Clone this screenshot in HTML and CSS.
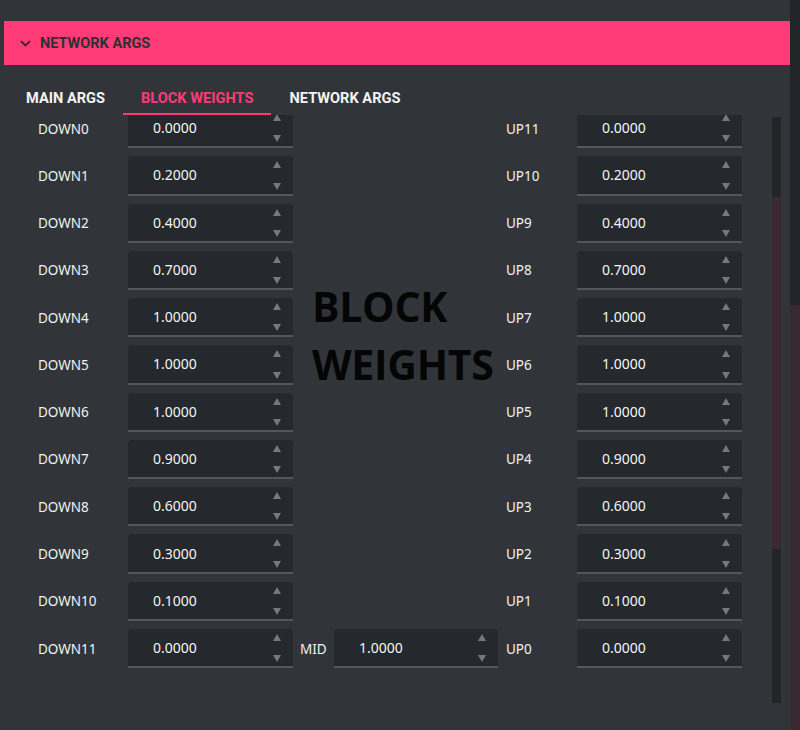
FILE: index.html
```html
<!DOCTYPE html>
<html lang="en">
<head>
    <meta charset="UTF-8">
    <meta name="viewport" content="width=device-width, initial-scale=1.0">
    <title>Block Weights</title>
    <link rel="stylesheet" href="styles.css">
</head>
<body>
    <div class="page">
        <div class="main">
            <div class="accordion-head">
                <svg class="chevron" width="11" height="7" viewBox="0 0 11 7"><path d="M1 1.2 L5.5 5.5 L10 1.2" fill="none" stroke="#2b2d30" stroke-width="1.8"/></svg>
                <span>NETWORK ARGS</span>
            </div>

            <div class="tabs">
                <div class="tab">MAIN ARGS</div>
                <div class="tab active">BLOCK WEIGHTS</div>
                <div class="tab">NETWORK ARGS</div>
            </div>

            <div class="panel">
                <div class="viewport">
                    <div class="weights">
                        <div class="big-title">BLOCK<br>WEIGHTS</div>
                        <div class="mid-cell">
                            <span class="label">MID</span>
                            <div class="num wide"><span class="val">1.0000</span><span class="spin"><i class="up"></i><i class="down"></i></span></div>
                        </div>

                        <span class="label">DOWN0</span>
                        <div class="num"><span class="val">0.0000</span><span class="spin"><i class="up"></i><i class="down"></i></span></div>
                        <span class="label">UP11</span>
                        <div class="num"><span class="val">0.0000</span><span class="spin"><i class="up"></i><i class="down"></i></span></div>

                        <span class="label">DOWN1</span>
                        <div class="num"><span class="val">0.2000</span><span class="spin"><i class="up"></i><i class="down"></i></span></div>
                        <span class="label">UP10</span>
                        <div class="num"><span class="val">0.2000</span><span class="spin"><i class="up"></i><i class="down"></i></span></div>

                        <span class="label">DOWN2</span>
                        <div class="num"><span class="val">0.4000</span><span class="spin"><i class="up"></i><i class="down"></i></span></div>
                        <span class="label">UP9</span>
                        <div class="num"><span class="val">0.4000</span><span class="spin"><i class="up"></i><i class="down"></i></span></div>

                        <span class="label">DOWN3</span>
                        <div class="num"><span class="val">0.7000</span><span class="spin"><i class="up"></i><i class="down"></i></span></div>
                        <span class="label">UP8</span>
                        <div class="num"><span class="val">0.7000</span><span class="spin"><i class="up"></i><i class="down"></i></span></div>

                        <span class="label">DOWN4</span>
                        <div class="num"><span class="val">1.0000</span><span class="spin"><i class="up"></i><i class="down"></i></span></div>
                        <span class="label">UP7</span>
                        <div class="num"><span class="val">1.0000</span><span class="spin"><i class="up"></i><i class="down"></i></span></div>

                        <span class="label">DOWN5</span>
                        <div class="num"><span class="val">1.0000</span><span class="spin"><i class="up"></i><i class="down"></i></span></div>
                        <span class="label">UP6</span>
                        <div class="num"><span class="val">1.0000</span><span class="spin"><i class="up"></i><i class="down"></i></span></div>

                        <span class="label">DOWN6</span>
                        <div class="num"><span class="val">1.0000</span><span class="spin"><i class="up"></i><i class="down"></i></span></div>
                        <span class="label">UP5</span>
                        <div class="num"><span class="val">1.0000</span><span class="spin"><i class="up"></i><i class="down"></i></span></div>

                        <span class="label">DOWN7</span>
                        <div class="num"><span class="val">0.9000</span><span class="spin"><i class="up"></i><i class="down"></i></span></div>
                        <span class="label">UP4</span>
                        <div class="num"><span class="val">0.9000</span><span class="spin"><i class="up"></i><i class="down"></i></span></div>

                        <span class="label">DOWN8</span>
                        <div class="num"><span class="val">0.6000</span><span class="spin"><i class="up"></i><i class="down"></i></span></div>
                        <span class="label">UP3</span>
                        <div class="num"><span class="val">0.6000</span><span class="spin"><i class="up"></i><i class="down"></i></span></div>

                        <span class="label">DOWN9</span>
                        <div class="num"><span class="val">0.3000</span><span class="spin"><i class="up"></i><i class="down"></i></span></div>
                        <span class="label">UP2</span>
                        <div class="num"><span class="val">0.3000</span><span class="spin"><i class="up"></i><i class="down"></i></span></div>

                        <span class="label">DOWN10</span>
                        <div class="num"><span class="val">0.1000</span><span class="spin"><i class="up"></i><i class="down"></i></span></div>
                        <span class="label">UP1</span>
                        <div class="num"><span class="val">0.1000</span><span class="spin"><i class="up"></i><i class="down"></i></span></div>

                        <span class="label">DOWN11</span>
                        <div class="num"><span class="val">0.0000</span><span class="spin"><i class="up"></i><i class="down"></i></span></div>
                        <span class="label">UP0</span>
                        <div class="num"><span class="val">0.0000</span><span class="spin"><i class="up"></i><i class="down"></i></span></div>
                    </div>
                </div>
                <div class="scrollbar inner">
                    <div class="track-top"></div>
                    <div class="thumb"></div>
                    <div class="track-bottom"></div>
                </div>
            </div>
        </div>
        <div class="scrollbar outer">
            <div class="track-top"></div>
            <div class="thumb"></div>
        </div>
    </div>
</body>
</html>
```

FILE: styles.css
```css
html, body {
    margin: 0;
    padding: 0;
}
body {
    background-color: #313539;
    font-family: "Noto Sans", "Open Sans", sans-serif;
    color: #f0f0f0;
    overflow: hidden;
}
.page {
    display: flex;
    height: 730px;
}
.main {
    flex: 1;
    padding: 21px 0 0 4px;
    display: flex;
    flex-direction: column;
    min-width: 0;
}
.accordion-head {
    height: 44px;
    background-color: #ff3b78;
    display: flex;
    align-items: center;
    padding-left: 16px;
    gap: 9px;
    font-family: Roboto, sans-serif;
    font-weight: 700;
    font-size: 14.5px;
    color: #2d3034;
}
.chevron {
    margin-top: 1px;
}
.tabs {
    display: flex;
    margin: 15px 0 0 4px;
    height: 35px;
}
.tab {
    padding: 3px 18px 0;
    display: flex;
    align-items: center;
    font-family: Roboto, sans-serif;
    font-weight: 700;
    font-size: 14.6px;
    color: #f4f4f4;
    border-bottom: 2px solid transparent;
    box-sizing: border-box;
}
.tab.active {
    color: #ff3b78;
    border-bottom-color: #ff3b78;
}
.panel {
    display: flex;
    height: 588px;
}
.viewport {
    flex: 1;
    overflow: hidden;
    padding-left: 34px;
}
.weights {
    margin-top: -6px;
    display: grid;
    grid-template-columns: 90px 165px 213px 71px 165px;
    grid-auto-rows: 39.27px;
    row-gap: 8px;
    align-items: center;
}
.label {
    font-size: 13.5px;
    color: #f2f2f2;
}
.num {
    height: 100%;
    box-sizing: border-box;
    background-color: #25282c;
    border-bottom: 2px solid #53575c;
    border-radius: 4px 4px 0 0;
    display: flex;
    align-items: center;
    justify-content: space-between;
    padding: 0 12px 0 25px;
}
.num.wide {
    width: 164px;
}
.val {
    font-size: 14px;
    color: #f4f4f4;
}
.spin {
    height: 100%;
    display: flex;
    flex-direction: column;
    justify-content: space-between;
    padding: 5px 0 4px;
    box-sizing: border-box;
}
.spin i {
    display: block;
    width: 0;
    height: 0;
    border-left: 4.5px solid transparent;
    border-right: 4.5px solid transparent;
}
.spin .up {
    border-bottom: 7px solid #76797c;
}
.spin .down {
    border-top: 7px solid #76797c;
}
.big-title {
    grid-column: 3;
    grid-row: 1 / 12;
    align-self: start;
    padding: 168px 0 0 19px;
    font-family: "Open Sans", sans-serif;
    font-weight: 700;
    font-size: 41px;
    line-height: 58px;
    letter-spacing: -0.3px;
    color: #050505;
}
.mid-cell {
    grid-column: 3;
    grid-row: 12;
    height: 100%;
    display: flex;
    align-items: center;
    padding-left: 7px;
}
.mid-cell .label {
    width: 34px;
}
.scrollbar {
    display: flex;
    flex-direction: column;
}
.scrollbar.inner {
    width: 9px;
    margin: 2px 9px 0 30px;
    height: 586px;
}
.scrollbar .track-top,
.scrollbar .track-bottom {
    background-color: #222528;
}
.scrollbar.inner .track-top {
    height: 80px;
}
.scrollbar.inner .thumb {
    height: 352px;
    background-color: #3b2932;
}
.scrollbar.inner .track-bottom {
    flex: 1;
}
.scrollbar.outer {
    width: 10px;
}
.scrollbar.outer .track-top {
    height: 305px;
}
.scrollbar.outer .thumb {
    flex: 1;
    background-color: #3b2932;
}
```
